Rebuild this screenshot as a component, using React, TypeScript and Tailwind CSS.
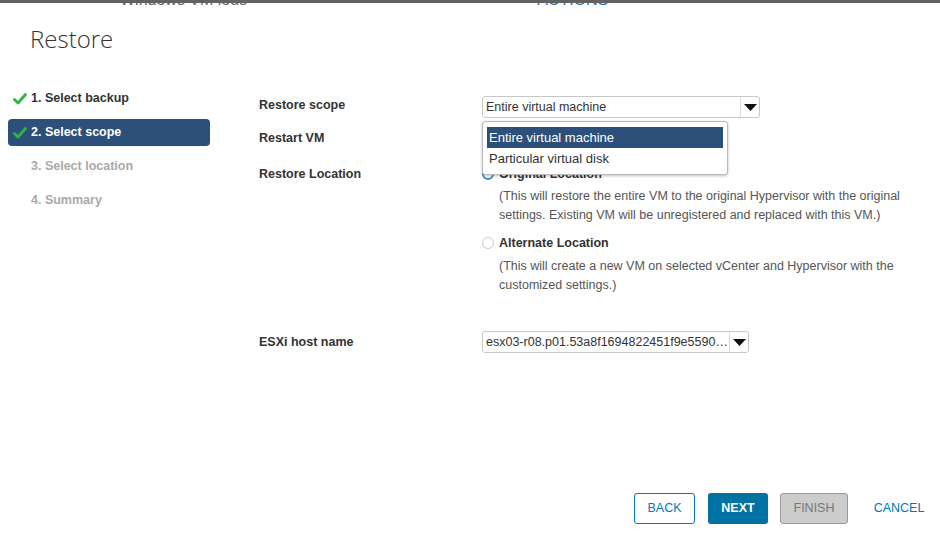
import React from "react";

const Check = () => (
  <svg width="14" height="12" viewBox="0 0 14 12" className="shrink-0">
    <path d="M1.5 6.5 L5 10 L12.5 1.5" fill="none" stroke="#2fb344" strokeWidth="2.8" strokeLinecap="round" strokeLinejoin="round" />
  </svg>
);

const Caret = () => (
  <svg width="13" height="7" viewBox="0 0 13 7">
    <path d="M0 0 H13 L6.5 7 Z" fill="#111" />
  </svg>
);

function Select({ value, width, children }: { value: string; width: string; children?: React.ReactNode }) {
  return (
    <div className={`relative ${width}`}>
      <div className="flex h-[22px] items-stretch rounded-[3px] border border-[#c8c8c8] bg-white">
        <div className="flex min-w-0 flex-1 items-center overflow-hidden whitespace-nowrap pl-[3px] text-[12.5px] text-[#333]">
          <span className="truncate">{value}</span>
        </div>
        <div className="flex w-[19px] items-center justify-center border-l border-[#dcdcdc]">
          <Caret />
        </div>
      </div>
      {children}
    </div>
  );
}

export default function App() {
  const font = { fontFamily: '"Liberation Sans", Arial, sans-serif' };
  return (
    <div className="flex h-[534px] w-[940px] flex-col overflow-hidden bg-white" style={font}>
      {/* top strip */}
      <div className="h-[3px] bg-[#626262]" />
      <div className="h-[2px] overflow-hidden">
        <div className="-mt-[15px] flex whitespace-nowrap pl-[120px] text-[16px] text-[#666]">
          <span>Windows VM logs</span>
          <span className="pl-[290px] text-[#2a6fb0]">ACTIONS</span>
        </div>
      </div>

      {/* title */}
      <div
        className="pl-[30px] pt-[18px] text-[24px] font-light leading-[32px] text-[#333]"
        style={{ fontFamily: '"Open Sans", sans-serif' }}
      >
        Restore
      </div>

      <div className="flex flex-1">
        {/* left nav */}
        <nav className="flex w-[210px] flex-col gap-[7px] pl-[8px] pt-[30px] text-[12.5px] font-bold">
          <div className="flex h-[27px] items-center gap-[4px] pl-[5px] text-[#333]">
            <Check />
            <span>1. Select backup</span>
          </div>
          <div className="flex h-[27px] items-center gap-[4px] rounded-[4px] bg-[#2c5079] pl-[5px] text-white">
            <Check />
            <span>2. Select scope</span>
          </div>
          <div className="flex h-[27px] items-center pl-[23px] text-[#a9a9a9]">3. Select location</div>
          <div className="flex h-[27px] items-center pl-[23px] text-[#a9a9a9]">4. Summary</div>
        </nav>

        {/* form */}
        <div className="flex flex-col pl-[49px] pt-[41px] text-[12.5px] text-[#333]">
          <div className="flex">
            <div className="w-[223px] pt-[1px] font-bold leading-[16px]">Restore scope</div>
            <Select value="Entire virtual machine" width="w-[278px]">
              <div className="absolute left-0 top-[25px] z-10 w-[246px] rounded-[3px] border border-[#b9b9b9] bg-white px-[4px] py-[5px] shadow-[0_1px_3px_rgba(0,0,0,0.25)]">
                <div className="flex h-[21px] items-center bg-[#2c5079] pl-[2px] text-[13px] text-white">Entire virtual machine</div>
                <div className="flex h-[21px] items-center pl-[2px] text-[13px] text-[#333]">Particular virtual disk</div>
              </div>
            </Select>
          </div>

          <div className="mt-[12px] flex">
            <div className="w-[223px] font-bold leading-[16px]">Restart VM</div>
          </div>

          <div className="mt-[20px] flex">
            <div className="w-[223px] font-bold leading-[16px]">Restore Location</div>
            <div className="flex flex-col">
              <div className="flex h-[16px] items-center gap-[5px]">
                <span className="h-[12px] w-[12px] rounded-full border-2 border-[#3a8fd0]" />
                <span className="font-bold">Original Location</span>
              </div>
              <div className="mt-[5px] pl-[17px] leading-[19px] text-[#555]">
                (This will restore the entire VM to the original Hypervisor with the original
                <br />
                settings. Existing VM will be unregistered and replaced with this VM.)
              </div>
              <div className="mt-[10px] flex h-[16px] items-center gap-[5px]">
                <span className="h-[12px] w-[12px] rounded-full border border-[#c9c9c9]" />
                <span className="font-bold">Alternate Location</span>
              </div>
              <div className="mt-[6px] pl-[17px] leading-[19px] text-[#555]">
                (This will create a new VM on selected vCenter and Hypervisor with the
                <br />
                customized settings.)
              </div>
            </div>
          </div>

          <div className="mt-[36px] flex items-center">
            <div className="w-[223px] font-bold leading-[16px]">ESXi host name</div>
            <Select value="esx03-r08.p01.53a8f1694822451f9e5590c5b4bb13a9.local" width="w-[267px]" />
          </div>
        </div>
      </div>

      {/* footer */}
      <div className="flex items-center justify-end pb-[10px] pr-[8px] text-[12.5px]">
        <button className="h-[31px] w-[61px] rounded-[3px] border border-[#0079b8] bg-white text-[#0079b8]">BACK</button>
        <button className="ml-[13px] h-[31px] w-[60px] rounded-[3px] bg-[#0072a3] font-bold text-white">NEXT</button>
        <button className="ml-[12px] h-[31px] w-[68px] rounded-[3px] border border-[#9a9a9a] bg-[#cccccc] text-[#777]">FINISH</button>
        <button className="ml-[18px] h-[31px] w-[66px] text-[#0079b8]">CANCEL</button>
      </div>
    </div>
  );
}
